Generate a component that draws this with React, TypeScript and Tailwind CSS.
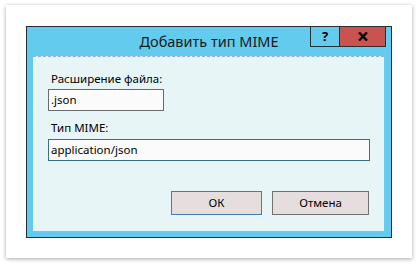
import React from 'react'

const font = { fontFamily: '"Noto Sans", "Open Sans", sans-serif' }

function Field({ label, value, width, top }: { label: string; value: string; width: string; top: string }) {
  return (
    <div className={top}>
      <div className="pl-[3px] text-[11.5px] leading-[16px] text-black">{label}</div>
      <div
        className={`${width} h-[22px] border bg-[#fbfbfb] flex items-center pl-[2px] text-[11.5px] text-black ${
          label.startsWith('Тип') ? 'mt-[3px] border-[#3b6f8c]' : 'mt-[2px] border-[#6b6b6b]'
        }`}
      >
        {value}
      </div>
    </div>
  )
}

export default function App() {
  return (
    <div className="w-[418px] h-[264px] bg-white pt-[5px] pl-[6px]" style={font}>
      {/* paper card */}
      <div className="w-[406px] h-[253px] bg-white shadow-[0_1px_4px_rgba(0,0,0,0.35)] pl-[20px] pt-[21px]">
        {/* dialog window */}
        <div className="relative w-[366px] h-[212px] border border-[#2d2d2d] bg-[#63cbee] flex flex-col">
          {/* title bar */}
          <div className="h-[29px] flex items-center justify-center text-[14.5px] text-[#1a1a1a] pt-[1px]">
            Добавить тип MIME
          </div>
          <div className="absolute top-[-1px] right-[5px] flex h-[21px]">
            <div className="w-[30px] border border-[#2d2d2d] flex items-center justify-center text-[13px] font-bold text-black">
              ?
            </div>
            <div className="w-[46px] border border-l-0 border-[#2d2d2d] bg-[#c9534f] flex items-center justify-center">
              <svg width="10" height="9" viewBox="0 0 10 9">
                <path d="M1 0.5 L9 8.5 M9 0.5 L1 8.5" stroke="#000" strokeWidth="2.4" />
              </svg>
            </div>
          </div>

          {/* client area */}
          <div className="ml-[6px] w-[351px] h-[175px] bg-[#e7f5f6] border-t border-dashed border-[#8fafe6] pt-[14px] pl-[15px] pr-[14px] flex flex-col">
            <Field label="Расширение файла:" value=".json" width="w-[116px]" top="" />
            <Field label="Тип MIME:" value="application/json" width="w-[322px]" top="mt-[9px]" />
            <div className="mt-[30px] flex justify-end gap-[10px] pr-[1px]">
              <button className="w-[91px] h-[24px] border border-[#3c7fb1] bg-[#e6dede] text-[11.5px] text-black">
                ОК
              </button>
              <button className="w-[97px] h-[24px] border border-[#707070] bg-[#e6dede] text-[11.5px] text-black">
                Отмена
              </button>
            </div>
          </div>
        </div>
      </div>
    </div>
  )
}
